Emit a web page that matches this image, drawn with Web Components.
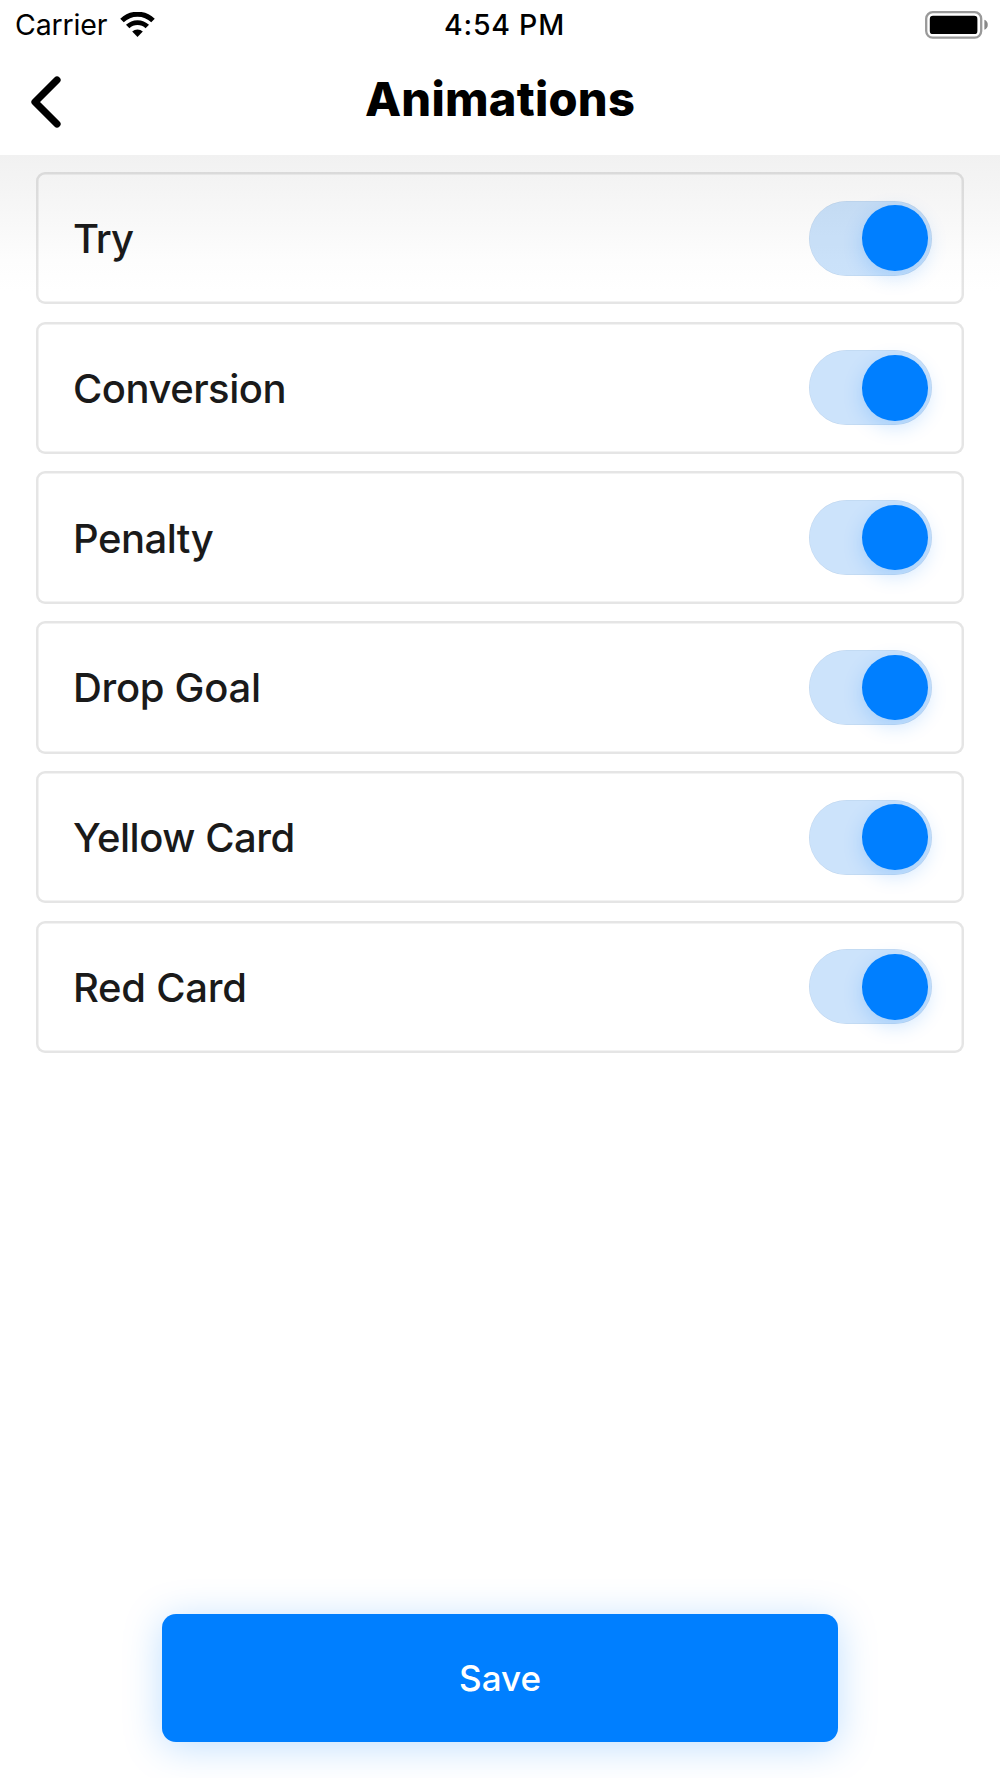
<!DOCTYPE html>
<html lang="en">
<head>
<meta charset="utf-8">
<title>Animations</title>
<style>
  html, body {
    margin: 0;
    height: 100%;
    background: #fff;
    font-family: Inter, "Liberation Sans", sans-serif;
  }
</style>
</head>
<body>
<settings-screen>
  <status-bar slot="top" carrier="Carrier" time="4:54 PM"></status-bar>
  <nav-header slot="top">Animations</nav-header>
  <toggle-row checked style="--tracking: -1px">Try</toggle-row>
  <toggle-row checked>Conversion</toggle-row>
  <toggle-row checked>Penalty</toggle-row>
  <toggle-row checked style="--tracking: -0.3px">Drop Goal</toggle-row>
  <toggle-row checked style="--tracking: -0.45px">Yellow Card</toggle-row>
  <toggle-row checked style="--tracking: -0.25px">Red Card</toggle-row>
  <primary-button slot="footer">Save</primary-button>
</settings-screen>

<script>
/**
 * Settings Screen
 * Status bar and header on top, rows below, action at the bottom
 */
class SettingsScreen extends HTMLElement {
  constructor() {
    super();
    this.attachShadow({ mode: 'open' });
  }

  connectedCallback() {
    this.shadowRoot.innerHTML = `
      <style>
        :host {
          display: flex;
          flex-direction: column;
          box-sizing: border-box;
          width: 1000px;
          height: 1778px;
          overflow: hidden;
        }

        main {
          flex: 1;
          display: flex;
          flex-direction: column;
          background: linear-gradient(#f1f1f1, #f7f7f7 42%, #fdfdfd 78%, #fff) top / 100% 136px no-repeat;
        }

        .rows {
          display: flex;
          flex-direction: column;
          gap: 17.4px;
          padding: 16.9px 36.4px 0;
        }

        footer {
          margin-top: auto;
          padding: 0 161.7px 36.3px;
        }
      </style>

      <slot name="top"></slot>
      <main>
        <div class="rows"><slot></slot></div>
        <footer><slot name="footer"></slot></footer>
      </main>
    `;
  }
}

class StatusBar extends HTMLElement {
  constructor() {
    super();
    this.attachShadow({ mode: 'open' });
  }

  connectedCallback() {
    this.shadowRoot.innerHTML = `
      <style>
        :host {
          display: grid;
          grid-template-columns: 1fr auto 1fr;
          align-items: center;
          height: 50.6px;
          padding: 0 12px 0 15px;
          font-size: 28.5px;
          line-height: 1;
          color: #000;
        }

        .left {
          display: flex;
          align-items: center;
          gap: 13px;
        }

        .carrier {
          letter-spacing: -0.15px;
        }

        .time {
          padding-left: 6px;
          font-weight: 500;
          letter-spacing: 0.75px;
        }

        .battery {
          justify-self: end;
        }

        svg {
          display: block;
        }
      </style>

      <div class="left">
        <span class="carrier">${this.getAttribute('carrier')}</span>
        <svg width="35" height="26" viewBox="0 0 35 26">
          <path d="M2 8.6A22 22 0 0 1 33 8.6" fill="none" stroke="#000" stroke-width="5"/>
          <path d="M7.7 14.6A14 14 0 0 1 27.3 14.6" fill="none" stroke="#000" stroke-width="4.9"/>
          <path d="M12.2 19.6a7.6 7.6 0 0 1 10.6 0L17.5 25z"/>
        </svg>
      </div>
      <span class="time">${this.getAttribute('time')}</span>
      <svg class="battery" width="63" height="29" viewBox="0 0 63 29">
        <rect x="1.2" y="1.2" width="55" height="25.4" rx="6.5" fill="none" stroke="#999" stroke-width="2.3"/>
        <rect x="4.8" y="4.7" width="47.6" height="18.4" rx="3.2"/>
        <path d="M59.4 8.8a5.4 5.4 0 0 1 0 10z" fill="#888"/>
      </svg>
    `;
  }
}

class NavHeader extends HTMLElement {
  constructor() {
    super();
    this.attachShadow({ mode: 'open' });
  }

  connectedCallback() {
    this.shadowRoot.innerHTML = `
      <style>
        :host {
          display: grid;
          grid-template-columns: 1fr auto 1fr;
          height: 104.4px;
          padding: 0 31px;
          box-sizing: border-box;
          color: #000;
        }

        svg {
          display: block;
          margin-top: 25.5px;
        }

        h1 {
          margin: 18.3px 0 0;
          font-size: 47px;
          line-height: 60px;
          font-weight: 800;
          letter-spacing: 0.25px;
        }
      </style>

      <svg width="31" height="52" viewBox="0 0 31 52">
        <path d="M26 4L4 26L26 48" fill="none" stroke="#000" stroke-width="7.2" stroke-linecap="round" stroke-linejoin="round"/>
      </svg>
      <h1><slot></slot></h1>
    `;
  }
}

class ToggleSwitch extends HTMLElement {
  constructor() {
    super();
    this.attachShadow({ mode: 'open' });
  }

  connectedCallback() {
    this.shadowRoot.innerHTML = `
      <style>
        :host {
          display: flex;
          align-items: center;
          box-sizing: border-box;
          width: 123px;
          height: 75px;
          padding: 0 4.7px;
          border-radius: 37.5px;
          background: #e5e5e5;
        }

        :host([checked]) {
          justify-content: flex-end;
          background: rgba(0, 117, 235, 0.2);
          box-shadow: inset 0 0 0 0.5px rgba(90, 120, 150, 0.14);
        }

        .knob {
          width: 65.4px;
          height: 65.4px;
          border-radius: 50%;
          background: #007fff;
          box-shadow: 0 6px 20px rgba(0, 127, 255, 0.2);
        }
      </style>

      <div class="knob"></div>
    `;
  }
}

class ToggleRow extends HTMLElement {
  constructor() {
    super();
    this.attachShadow({ mode: 'open' });
  }

  connectedCallback() {
    const checked = this.hasAttribute('checked') ? 'checked' : '';

    this.shadowRoot.innerHTML = `
      <style>
        :host {
          display: flex;
          align-items: center;
          justify-content: space-between;
          box-sizing: border-box;
          height: 132.4px;
          padding: 0 31.4px 0 36.6px;
          border-radius: 9px;
          box-shadow: inset 0 0 0 2.5px rgba(0, 0, 0, 0.1);
          font-size: 40px;
          font-weight: 460;
          line-height: 1.2;
          letter-spacing: var(--tracking, -0.5px);
          color: #1a1a1a;
        }

        span {
          padding-top: 1.8px;
        }
      </style>

      <span><slot></slot></span>
      <toggle-switch ${checked}></toggle-switch>
    `;
  }
}

class PrimaryButton extends HTMLElement {
  constructor() {
    super();
    this.attachShadow({ mode: 'open' });
  }

  connectedCallback() {
    this.shadowRoot.innerHTML = `
      <style>
        :host {
          display: flex;
          align-items: center;
          justify-content: center;
          height: 128px;
          border-radius: 14px;
          background: #007fff;
          box-shadow: 0 5px 38px rgba(0, 127, 255, 0.25);
          font-size: 35px;
          font-weight: 530;
          color: #fff;
        }
      </style>

      <span><slot></slot></span>
    `;
  }
}

customElements.define('settings-screen', SettingsScreen);
customElements.define('status-bar', StatusBar);
customElements.define('nav-header', NavHeader);
customElements.define('toggle-switch', ToggleSwitch);
customElements.define('toggle-row', ToggleRow);
customElements.define('primary-button', PrimaryButton);
</script>
</body>
</html>
